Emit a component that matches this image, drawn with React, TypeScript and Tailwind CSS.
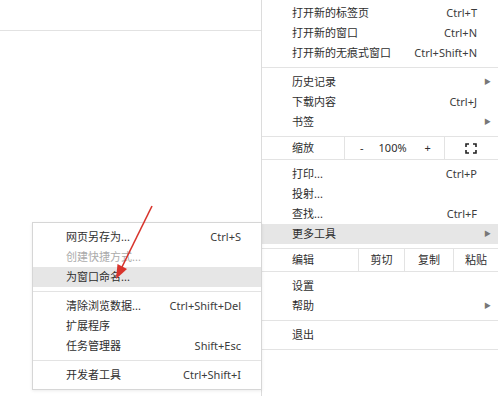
import type { ReactNode } from "react";

type Item = {
  label: string;
  shortcut?: string;
  sub?: boolean;
  active?: boolean;
  disabled?: boolean;
};

const FONT = "font-['Noto_Sans','Noto_Sans_CJK_SC',sans-serif]";

function Row({ item, pad }: { item: Item; pad: string }) {
  return (
    <div
      className={`flex h-5 items-center ${pad} ${item.active ? "bg-[#e6e6e6]" : ""} ${
        item.disabled ? "text-[#ababab]" : "text-[#2e2e2e]"
      }`}
    >
      <span className="flex-1 truncate">{item.label}</span>
      {item.shortcut && <span className="text-[#3c3c3c]">{item.shortcut}</span>}
      {item.sub && (
        <span className="absolute right-[7px] text-[7px] text-[#777]">▶</span>
      )}
    </div>
  );
}

function Group({ items, pad }: { items: Item[]; pad: string }) {
  return (
    <div className="relative py-1">
      {items.map((it) => (
        <div key={it.label} className="relative">
          <Row item={it} pad={pad} />
        </div>
      ))}
    </div>
  );
}

function Line() {
  return <div className="h-px bg-[#e3e3e3]" />;
}

function Cell({ children, className = "" }: { children: ReactNode; className?: string }) {
  return (
    <div className={`flex h-full items-center border-l border-[#e3e3e3] ${className}`}>
      {children}
    </div>
  );
}

function FullscreenIcon() {
  return (
    <svg width="12" height="11" viewBox="0 0 12 11" fill="none" stroke="#222" strokeWidth="1.6">
      <path d="M1 4V1h3M8 1h3v3M11 7v3H8M4 10H1V7" />
    </svg>
  );
}

const MAIN_1: Item[] = [
  { label: "打开新的标签页", shortcut: "Ctrl+T" },
  { label: "打开新的窗口", shortcut: "Ctrl+N" },
  { label: "打开新的无痕式窗口", shortcut: "Ctrl+Shift+N" },
];
const MAIN_2: Item[] = [
  { label: "历史记录", sub: true },
  { label: "下载内容", shortcut: "Ctrl+J" },
  { label: "书签", sub: true },
];
const MAIN_3: Item[] = [
  { label: "打印...", shortcut: "Ctrl+P" },
  { label: "投射..." },
  { label: "查找...", shortcut: "Ctrl+F" },
  { label: "更多工具", sub: true, active: true },
];
const MAIN_4: Item[] = [{ label: "设置" }, { label: "帮助", sub: true }];
const MAIN_5: Item[] = [{ label: "退出" }];

const SUB_1: Item[] = [
  { label: "网页另存为...", shortcut: "Ctrl+S" },
  { label: "创建快捷方式...", disabled: true },
  { label: "为窗口命名...", active: true },
];
const SUB_2: Item[] = [
  { label: "清除浏览数据...", shortcut: "Ctrl+Shift+Del" },
  { label: "扩展程序" },
  { label: "任务管理器", shortcut: "Shift+Esc" },
];
const SUB_3: Item[] = [{ label: "开发者工具", shortcut: "Ctrl+Shift+I" }];

export default function App() {
  const mainPad = "pl-[30px] pr-[21px]";
  const subPad = "pl-[33px] pr-[20px]";
  return (
    <div className={`relative h-[396px] w-[500px] overflow-hidden bg-white text-[11px] ${FONT}`}>
      {/* page behind the menus */}
      <div className="mt-[30px] h-px w-[261px] bg-[#e2e2e2]" />

      {/* main menu */}
      <div className="absolute left-[261px] top-[-1px] h-[400px] w-[237px] border-l border-[#dcdcdc] bg-white">
        <Group items={MAIN_1} pad={mainPad} />
        <Line />
        <Group items={MAIN_2} pad={mainPad} />
        <Line />
        <div className="flex h-[22px] items-center text-[#2e2e2e]">
          <div className="w-[82px] pl-[30px]">缩放</div>
          <Cell className="w-[100px]">
            <span className="ml-[15px]">-</span>
            <span className="ml-[15px]">100%</span>
            <span className="ml-[18px]">+</span>
          </Cell>
          <Cell className="flex-1 justify-end pr-[21px]">
            <FullscreenIcon />
          </Cell>
        </div>
        <Line />
        <Group items={MAIN_3} pad={mainPad} />
        <Line />
        <div className="flex h-[22px] items-center text-[#2e2e2e]">
          <div className="w-[96px] pl-[30px]">编辑</div>
          <Cell className="w-[46px] justify-center">剪切</Cell>
          <Cell className="w-[49px] justify-center">复制</Cell>
          <Cell className="flex-1 justify-center">粘贴</Cell>
        </div>
        <Line />
        <Group items={MAIN_4} pad={mainPad} />
        <Line />
        <Group items={MAIN_5} pad={mainPad} />
        <Line />
      </div>

      {/* more tools submenu */}
      <div className="absolute left-[32px] top-[222px] w-[230px] border border-[#d6d6d6] bg-white shadow-[0_1px_3px_rgba(0,0,0,0.08)]">
        <Group items={SUB_1} pad={subPad} />
        <Line />
        <Group items={SUB_2} pad={subPad} />
        <Line />
        <Group items={SUB_3} pad={subPad} />
      </div>

      {/* red pointer arrow */}
      <svg className="pointer-events-none absolute left-0 top-0" width="500" height="396">
        <line x1="152" y1="206" x2="122" y2="267" stroke="#d8342c" strokeWidth="1.6" />
        <polygon points="116,279 127,269 117.5,264" fill="#d8342c" />
      </svg>
    </div>
  );
}
